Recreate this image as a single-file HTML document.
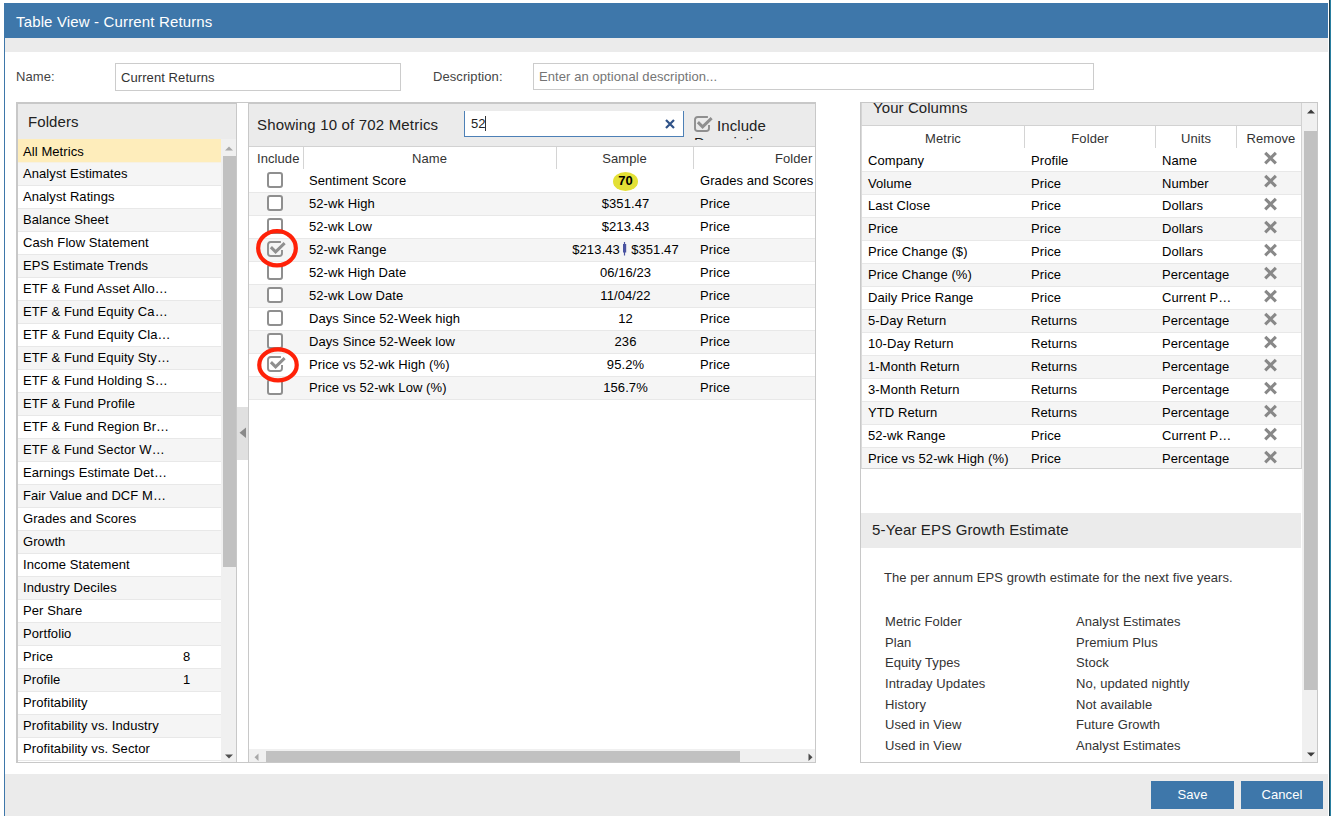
<!DOCTYPE html>
<html><head><meta charset="utf-8"><title>Table View</title>
<style>
*{box-sizing:border-box;}
html,body{margin:0;padding:0;}
body{width:1331px;height:816px;overflow:hidden;background:#fff;position:relative;font-family:"Liberation Sans",sans-serif;color:#000;font-size:13px;letter-spacing:0.08px;}
.a{position:absolute;white-space:nowrap;}
#edge1{left:1329px;top:0;width:1px;height:816px;background:#1f3f4c;}
#edge2{left:1330px;top:0;width:1px;height:816px;background:#2a7fa0;}
#dlgborder{left:4px;top:3px;width:1px;height:813px;background:#3e77aa;}
#title{left:4px;top:3px;width:1324px;height:35px;background:#3e77aa;color:#fff;font-size:15px;}
#title span{left:12px;top:10px;letter-spacing:0.15px;}
#strip{left:5px;top:38px;width:1323px;height:14px;background:#ebebeb;}
#footer{left:5px;top:774px;width:1323px;height:42px;background:#ebebeb;}
.btn{top:781px;height:28px;background:#3e77aa;color:#fff;font-size:13px;text-align:center;line-height:28px;}
#bsave{left:1151px;width:83px;}
#bcancel{left:1241px;width:82px;}
.lbl{color:#444;font-size:13px;}
#lname{left:16px;top:69px;}
#ldesc{left:433px;top:69px;}
.inp{border:1px solid #ccc;background:#fff;font-size:13px;}
#iname{left:115px;top:63px;width:286px;height:28px;}
#iname span{left:5px;top:6px;color:#333;}
#idesc{left:533px;top:63px;width:561px;height:27px;}
#idesc span{left:5px;top:5px;color:#757575;}

#folders{left:16px;top:102px;width:221px;height:661px;border-top:2px solid #c8c8c8;border-left:2px solid #c8c8c8;border-bottom:1px solid #c8c8c8;border-right:1px solid #c8c8c8;overflow:hidden;}
#foldhead{left:0;top:0;width:218px;height:35px;background:#ebebeb;}
#foldtitle{left:10px;top:9px;font-size:15px;color:#222;}
.frow{left:0;width:203px;height:23px;border-bottom:1px solid #e8e8e8;background:#fff;}
.frow .t{left:5px;top:3px;}
.frow.sel .t{top:5px;}
.frow .c{left:165px;top:3px;}
.frow.sel{background:#feedbb;border-bottom-color:#f6f1e4;height:24px;}
#fscroll{left:203px;top:35px;width:15px;height:623px;background:#f0f0f0;}
#fthumb{left:2px;top:17px;width:13px;height:411px;background:#c1c1c1;}
#gap{left:237px;top:102px;width:11px;height:661px;border-top:1px solid #c8c8c8;border-bottom:1px solid #c8c8c8;}
#collapse{left:237px;top:407px;width:11px;height:53px;background:#e0e0e0;}

#middle{left:248px;top:102px;width:568px;height:661px;border-top:2px solid #c8c8c8;border-left:1px solid #c8c8c8;border-right:1px solid #c8c8c8;border-bottom:1px solid #c8c8c8;overflow:hidden;}
#midhead{left:0;top:0;width:566px;height:43px;background:#ebebeb;border-bottom:1px solid #d2d2d2;overflow:hidden;}
.showing{left:8px;top:12px;font-size:15px;letter-spacing:0.18px;color:#222;}
#search{left:215px;top:7px;width:220px;height:26px;background:#fff;border-left:1px solid #4d80b6;border-right:1px solid #4d80b6;border-bottom:1px solid #4d80b6;}
#search .q{left:6px;top:5px;font-size:13px;color:#222;}
#search .caret{left:20px;top:5px;width:1px;height:15px;background:#333;}
#search .x{left:200px;top:8px;}
#inclwrap{left:0;top:0;width:566px;height:36px;overflow:hidden;}
#inclchk{left:443.5px;top:11px;width:21px;height:18px;}
.incl{left:468px;top:13px;font-size:15px;color:#222;}
.incl2{left:445px;top:30px;font-size:15px;color:#222;}
#midcols{left:0;top:43px;width:566px;height:23px;background:#fff;color:#333;}
#midcols .sep{top:0;width:1px;height:22px;background:#d4d4d4;}
#midcols .h1{left:8px;top:4px;}
#midcols .h2{left:54px;width:253px;text-align:center;top:4px;}
#midcols .h3{left:307px;width:137px;text-align:center;top:4px;}
#midcols .h4{left:526px;top:4px;}
.mrow{left:0;width:566px;height:23px;border-bottom:1px solid #e8e8e8;background:#fff;}
.mrow .box{left:18px;top:2px;width:16px;height:16px;border:2px solid #8f8f8f;border-radius:3px;background:#fff;}
.mrow .chk{left:17px;top:1px;}
.mrow .n{left:60px;top:3px;}
.mrow .samp{left:308px;width:137px;text-align:center;top:3px;}
.mrow .f{left:451px;top:3px;}
.rbar{display:inline-block;vertical-align:-2px;margin:0 0.5px 0 -1.5px;}
.mrow .badge{left:364px;top:2px;width:25px;height:19px;border-radius:50%;background:#e3e036;text-align:center;font-weight:bold;line-height:18px;}
#hscroll{left:0;top:645px;width:566px;height:13px;background:#f0f0f0;}
#hthumb{left:17px;top:2px;width:474px;height:11px;background:#c1c1c1;}
#circles{left:0;top:0;pointer-events:none;}

#right{left:860px;top:102px;width:458px;height:661px;border-top:1px solid #c8c8c8;border-left:1px solid #c8c8c8;border-right:1px solid #c8c8c8;border-bottom:1px solid #c8c8c8;overflow:hidden;}
#rhead{left:0;top:0;width:441px;height:23px;border-left:1px solid #d4d4d4;background:#ebebeb;border-bottom:1px solid #d2d2d2;border-right:1px solid #d2d2d2;}
#rhead span{left:11px;top:-4px;font-size:15px;color:#222;}
#rtable{left:0;top:23px;width:441px;border-left:1px solid #dadada;height:343px;border-bottom:1px solid #d2d2d2;border-right:1px solid #d2d2d2;overflow:hidden;}
#rcols{left:0;top:0;width:439px;height:23px;color:#333;}
#rcols .sep{top:0;width:1px;height:22px;background:#d4d4d4;}
#rcols .h{top:5px;text-align:center;}
#rcols .c1{left:0;width:162px;}
#rcols .c2{left:163px;width:130px;}
#rcols .c3{left:294px;width:80px;}
#rcols .c4{left:377px;width:64px;}
.rrow{left:0;width:439px;height:23px;border-bottom:1px solid #e8e8e8;background:#fff;}
.rrow .m{left:6px;top:3px;}
.rrow .f{left:169px;top:3px;}
.rrow .u{left:300px;top:3px;}
.rrow.r0 span,.rrow.r1 span{top:4px;}
.rrow .rx{left:402px;top:2px;}
#epshead{left:0;top:410px;width:440px;height:35px;background:#ebebeb;}
#epshead span{left:11px;top:8px;font-size:15px;letter-spacing:0.15px;color:#222;}
#epsdesc{left:23px;top:467px;color:#333;letter-spacing:0.07px;}
#dets{left:1px;top:511px;width:439px;height:149px;overflow:hidden;color:#333;}
.det{left:0;width:439px;height:20px;}
.det .da{left:23px;top:0;}
.det .db{left:214px;top:0;}
.frow.odd,.mrow.odd,.rrow.odd{background:#f5f5f5;}
#rscroll{left:441px;top:0;width:15px;height:659px;background:#f0f0f0;}
#rthumb{left:2px;top:28px;width:13px;height:559px;background:#c1c1c1;}

</style></head><body>
<div class="a" id="edge1"></div><div class="a" id="edge2"></div>
<div class="a" id="dlgborder"></div>
<div class="a" id="title"><span class="a">Table View - Current Returns</span></div>
<div class="a" id="strip"></div>
<div class="a lbl" id="lname">Name:</div>
<div class="a inp" id="iname"><span class="a">Current Returns</span></div>
<div class="a lbl" id="ldesc">Description:</div>
<div class="a inp" id="idesc"><span class="a">Enter an optional description...</span></div>
<div class="a" id="folders">
<div class="a" id="foldhead"></div><span class="a" id="foldtitle">Folders</span>
<div class="a frow sel" style="top:35px"><span class="a t">All Metrics</span></div>
<div class="a frow odd" style="top:59px"><span class="a t">Analyst Estimates</span></div>
<div class="a frow" style="top:82px"><span class="a t">Analyst Ratings</span></div>
<div class="a frow odd" style="top:105px"><span class="a t">Balance Sheet</span></div>
<div class="a frow" style="top:128px"><span class="a t">Cash Flow Statement</span></div>
<div class="a frow odd" style="top:151px"><span class="a t">EPS Estimate Trends</span></div>
<div class="a frow" style="top:174px"><span class="a t">ETF &amp; Fund Asset Allo…</span></div>
<div class="a frow odd" style="top:197px"><span class="a t">ETF &amp; Fund Equity Ca…</span></div>
<div class="a frow" style="top:220px"><span class="a t">ETF &amp; Fund Equity Cla…</span></div>
<div class="a frow odd" style="top:243px"><span class="a t">ETF &amp; Fund Equity Sty…</span></div>
<div class="a frow" style="top:266px"><span class="a t">ETF &amp; Fund Holding S…</span></div>
<div class="a frow odd" style="top:289px"><span class="a t">ETF &amp; Fund Profile</span></div>
<div class="a frow" style="top:312px"><span class="a t">ETF &amp; Fund Region Br…</span></div>
<div class="a frow odd" style="top:335px"><span class="a t">ETF &amp; Fund Sector W…</span></div>
<div class="a frow" style="top:358px"><span class="a t">Earnings Estimate Det…</span></div>
<div class="a frow odd" style="top:381px"><span class="a t">Fair Value and DCF M…</span></div>
<div class="a frow" style="top:404px"><span class="a t">Grades and Scores</span></div>
<div class="a frow odd" style="top:427px"><span class="a t">Growth</span></div>
<div class="a frow" style="top:450px"><span class="a t">Income Statement</span></div>
<div class="a frow odd" style="top:473px"><span class="a t">Industry Deciles</span></div>
<div class="a frow" style="top:496px"><span class="a t">Per Share</span></div>
<div class="a frow odd" style="top:519px"><span class="a t">Portfolio</span></div>
<div class="a frow" style="top:542px"><span class="a t">Price</span><span class="a c">8</span></div>
<div class="a frow odd" style="top:565px"><span class="a t">Profile</span><span class="a c">1</span></div>
<div class="a frow" style="top:588px"><span class="a t">Profitability</span></div>
<div class="a frow odd" style="top:611px"><span class="a t">Profitability vs. Industry</span></div>
<div class="a frow" style="top:634px"><span class="a t">Profitability vs. Sector</span></div>
<div class="a" id="fscroll"><svg class="a" style="left:4px;top:7px" width="8" height="5"><path d="M0 4.5 L4 0.5 L8 4.5Z" fill="#a8a8a8"/></svg><div class="a" id="fthumb"></div><svg class="a" style="left:4px;top:615px" width="8" height="5"><path d="M0 0.5 L8 0.5 L4 4.5Z" fill="#505050"/></svg></div>
</div>
<div class="a" id="gap"></div>
<div class="a" id="collapse"><svg class="a" style="left:2px;top:20px" width="8" height="12"><path d="M7 0.5 V11 L0.5 5.75Z" fill="#8a8a8a"/></svg></div>
<div class="a" id="middle">
<div class="a" id="midhead"><span class="a showing">Showing 10 of 702 Metrics</span>
<div class="a" id="search"><span class="a q">52</span><span class="a caret"></span><svg class="a x" width="10" height="10"><path d="M1 1 L9 9 M9 1 L1 9" stroke="#2f5288" stroke-width="2.2"/></svg></div>
<div class="a" id="inclwrap"><div class="a" id="inclchk"><svg class="a" width="21" height="18" viewBox="0 0 21 18"><path d="M14.9 2 H4.8 Q2 2 2 4.8 V13.2 Q2 16 4.8 16 H13.2 Q16 16 16 13.2 V9.9" fill="none" stroke="#8f8f8f" stroke-width="1.9"/><path d="M4.9 7.1 L9.6 11.8 L18.65 3.15" fill="none" stroke="#8f8f8f" stroke-width="3"/></svg></div><span class="a incl">Include</span><span class="a incl2">Description</span></div>
</div>
<div class="a" id="midcols"><span class="a h h1">Include</span><div class="a sep" style="left:54px"></div><span class="a h h2">Name</span><div class="a sep" style="left:307px"></div><span class="a h h3">Sample</span><div class="a sep" style="left:444px"></div><span class="a h h4">Folder</span></div>
<div class="a mrow" style="top:66px"><div class="a box"></div><span class="a n">Sentiment Score</span><span class="a badge">70</span><span class="a f">Grades and Scores</span></div>
<div class="a mrow odd" style="top:89px"><div class="a box"></div><span class="a n">52-wk High</span><span class="a samp">$351.47</span><span class="a f">Price</span></div>
<div class="a mrow" style="top:112px"><div class="a box"></div><span class="a n">52-wk Low</span><span class="a samp">$213.43</span><span class="a f">Price</span></div>
<div class="a mrow odd" style="top:135px"><svg class="a chk" width="21" height="18" viewBox="0 0 21 18"><path d="M14.9 2 H4.8 Q2 2 2 4.8 V13.2 Q2 16 4.8 16 H13.2 Q16 16 16 13.2 V9.9" fill="none" stroke="#8f8f8f" stroke-width="1.9"/><path d="M4.9 7.1 L9.6 11.8 L18.65 3.15" fill="none" stroke="#8f8f8f" stroke-width="3"/></svg><span class="a n">52-wk Range</span><span class="a samp">$213.43 <svg class="rbar" width="5" height="14" viewBox="0 0 5 14"><path d="M2.5 0 V13.5" stroke="#4a53a0" stroke-width="1.2"/><rect x="1" y="2" width="3.2" height="8.5" fill="#4a53a0"/></svg> $351.47</span><span class="a f">Price</span></div>
<div class="a mrow" style="top:158px"><div class="a box"></div><span class="a n">52-wk High Date</span><span class="a samp">06/16/23</span><span class="a f">Price</span></div>
<div class="a mrow odd" style="top:181px"><div class="a box"></div><span class="a n">52-wk Low Date</span><span class="a samp">11/04/22</span><span class="a f">Price</span></div>
<div class="a mrow" style="top:204px"><div class="a box"></div><span class="a n">Days Since 52-Week high</span><span class="a samp">12</span><span class="a f">Price</span></div>
<div class="a mrow odd" style="top:227px"><div class="a box"></div><span class="a n">Days Since 52-Week low</span><span class="a samp">236</span><span class="a f">Price</span></div>
<div class="a mrow" style="top:250px"><svg class="a chk" width="21" height="18" viewBox="0 0 21 18"><path d="M14.9 2 H4.8 Q2 2 2 4.8 V13.2 Q2 16 4.8 16 H13.2 Q16 16 16 13.2 V9.9" fill="none" stroke="#8f8f8f" stroke-width="1.9"/><path d="M4.9 7.1 L9.6 11.8 L18.65 3.15" fill="none" stroke="#8f8f8f" stroke-width="3"/></svg><span class="a n">Price vs 52-wk High (%)</span><span class="a samp">95.2%</span><span class="a f">Price</span></div>
<div class="a mrow odd" style="top:273px"><div class="a box"></div><span class="a n">Price vs 52-wk Low (%)</span><span class="a samp">156.7%</span><span class="a f">Price</span></div>
<div class="a" id="hscroll"><svg class="a" style="left:5px;top:4px" width="6" height="9"><path d="M4.5 0.5 V8 L0.5 4.25Z" fill="#a8a8a8"/></svg><div class="a" id="hthumb"></div><svg class="a" style="left:559px;top:4px" width="6" height="9"><path d="M0.5 0.5 V8 L4.5 4.25Z" fill="#4a4a4a"/></svg></div>
</div>
<svg class="a" id="circles" width="1331" height="816"><ellipse cx="277" cy="248.3" rx="18.85" ry="17.15" fill="none" stroke="#ff2108" stroke-width="4.2"/><ellipse cx="278" cy="364.9" rx="18.75" ry="15.55" fill="none" stroke="#ff2108" stroke-width="4.2"/></svg>
<div class="a" id="right">
<div class="a" id="rhead"><span class="a">Your Columns</span></div>
<div class="a" id="rtable">
<div class="a" id="rcols"><span class="a h c1">Metric</span><div class="a sep" style="left:162px"></div><span class="a h c2">Folder</span><div class="a sep" style="left:293px"></div><span class="a h c3">Units</span><div class="a sep" style="left:374px"></div><span class="a h c4">Remove</span></div>
<div class="a rrow r0" style="top:23px"><span class="a m">Company</span><span class="a f">Profile</span><span class="a u">Name</span><svg class="a rx" width="14" height="14" viewBox="0 0 14 14"><path d="M1.23 1.93 L11.87 12.27 M11.87 1.93 L1.23 12.27" stroke="#888" stroke-width="3.1"/></svg></div>
<div class="a rrow odd r1" style="top:46px"><span class="a m">Volume</span><span class="a f">Price</span><span class="a u">Number</span><svg class="a rx" width="14" height="14" viewBox="0 0 14 14"><path d="M1.23 1.93 L11.87 12.27 M11.87 1.93 L1.23 12.27" stroke="#888" stroke-width="3.1"/></svg></div>
<div class="a rrow" style="top:69px"><span class="a m">Last Close</span><span class="a f">Price</span><span class="a u">Dollars</span><svg class="a rx" width="14" height="14" viewBox="0 0 14 14"><path d="M1.23 1.93 L11.87 12.27 M11.87 1.93 L1.23 12.27" stroke="#888" stroke-width="3.1"/></svg></div>
<div class="a rrow odd" style="top:92px"><span class="a m">Price</span><span class="a f">Price</span><span class="a u">Dollars</span><svg class="a rx" width="14" height="14" viewBox="0 0 14 14"><path d="M1.23 1.93 L11.87 12.27 M11.87 1.93 L1.23 12.27" stroke="#888" stroke-width="3.1"/></svg></div>
<div class="a rrow" style="top:115px"><span class="a m">Price Change ($)</span><span class="a f">Price</span><span class="a u">Dollars</span><svg class="a rx" width="14" height="14" viewBox="0 0 14 14"><path d="M1.23 1.93 L11.87 12.27 M11.87 1.93 L1.23 12.27" stroke="#888" stroke-width="3.1"/></svg></div>
<div class="a rrow odd" style="top:138px"><span class="a m">Price Change (%)</span><span class="a f">Price</span><span class="a u">Percentage</span><svg class="a rx" width="14" height="14" viewBox="0 0 14 14"><path d="M1.23 1.93 L11.87 12.27 M11.87 1.93 L1.23 12.27" stroke="#888" stroke-width="3.1"/></svg></div>
<div class="a rrow" style="top:161px"><span class="a m">Daily Price Range</span><span class="a f">Price</span><span class="a u">Current P…</span><svg class="a rx" width="14" height="14" viewBox="0 0 14 14"><path d="M1.23 1.93 L11.87 12.27 M11.87 1.93 L1.23 12.27" stroke="#888" stroke-width="3.1"/></svg></div>
<div class="a rrow odd" style="top:184px"><span class="a m">5-Day Return</span><span class="a f">Returns</span><span class="a u">Percentage</span><svg class="a rx" width="14" height="14" viewBox="0 0 14 14"><path d="M1.23 1.93 L11.87 12.27 M11.87 1.93 L1.23 12.27" stroke="#888" stroke-width="3.1"/></svg></div>
<div class="a rrow" style="top:207px"><span class="a m">10-Day Return</span><span class="a f">Returns</span><span class="a u">Percentage</span><svg class="a rx" width="14" height="14" viewBox="0 0 14 14"><path d="M1.23 1.93 L11.87 12.27 M11.87 1.93 L1.23 12.27" stroke="#888" stroke-width="3.1"/></svg></div>
<div class="a rrow odd" style="top:230px"><span class="a m">1-Month Return</span><span class="a f">Returns</span><span class="a u">Percentage</span><svg class="a rx" width="14" height="14" viewBox="0 0 14 14"><path d="M1.23 1.93 L11.87 12.27 M11.87 1.93 L1.23 12.27" stroke="#888" stroke-width="3.1"/></svg></div>
<div class="a rrow" style="top:253px"><span class="a m">3-Month Return</span><span class="a f">Returns</span><span class="a u">Percentage</span><svg class="a rx" width="14" height="14" viewBox="0 0 14 14"><path d="M1.23 1.93 L11.87 12.27 M11.87 1.93 L1.23 12.27" stroke="#888" stroke-width="3.1"/></svg></div>
<div class="a rrow odd" style="top:276px"><span class="a m">YTD Return</span><span class="a f">Returns</span><span class="a u">Percentage</span><svg class="a rx" width="14" height="14" viewBox="0 0 14 14"><path d="M1.23 1.93 L11.87 12.27 M11.87 1.93 L1.23 12.27" stroke="#888" stroke-width="3.1"/></svg></div>
<div class="a rrow" style="top:299px"><span class="a m">52-wk Range</span><span class="a f">Price</span><span class="a u">Current P…</span><svg class="a rx" width="14" height="14" viewBox="0 0 14 14"><path d="M1.23 1.93 L11.87 12.27 M11.87 1.93 L1.23 12.27" stroke="#888" stroke-width="3.1"/></svg></div>
<div class="a rrow odd" style="top:322px"><span class="a m">Price vs 52-wk High (%)</span><span class="a f">Price</span><span class="a u">Percentage</span><svg class="a rx" width="14" height="14" viewBox="0 0 14 14"><path d="M1.23 1.93 L11.87 12.27 M11.87 1.93 L1.23 12.27" stroke="#888" stroke-width="3.1"/></svg></div>
</div>
<div class="a" id="epshead"><span class="a">5-Year EPS Growth Estimate</span></div>
<div class="a" id="epsdesc">The per annum EPS growth estimate for the next five years.</div>
<div class="a" id="dets">
<div class="a det" style="top:0.0px"><span class="a da">Metric Folder</span><span class="a db">Analyst Estimates</span></div>
<div class="a det" style="top:20.65px"><span class="a da">Plan</span><span class="a db">Premium Plus</span></div>
<div class="a det" style="top:41.3px"><span class="a da">Equity Types</span><span class="a db">Stock</span></div>
<div class="a det" style="top:61.95px"><span class="a da">Intraday Updates</span><span class="a db">No, updated nightly</span></div>
<div class="a det" style="top:82.6px"><span class="a da">History</span><span class="a db">Not available</span></div>
<div class="a det" style="top:103.25px"><span class="a da">Used in View</span><span class="a db">Future Growth</span></div>
<div class="a det" style="top:123.9px"><span class="a da">Used in View</span><span class="a db">Analyst Estimates</span></div>
<div class="a det" style="top:144.55px"><span class="a da">Sample</span><span class="a db">12.1%</span></div>
</div>
<div class="a" id="rscroll"><svg class="a" style="left:4.5px;top:6px" width="8" height="5"><path d="M0 4.5 L4 0.5 L8 4.5Z" fill="#3c3c3c"/></svg><div class="a" id="rthumb"></div><svg class="a" style="left:5px;top:649px" width="8" height="5"><path d="M0 0.5 L8 0.5 L4 4.5Z" fill="#3c3c3c"/></svg></div>
</div>
<div class="a" id="footer"></div>
<div class="a btn" id="bsave">Save</div>
<div class="a btn" id="bcancel">Cancel</div>
</body></html>
